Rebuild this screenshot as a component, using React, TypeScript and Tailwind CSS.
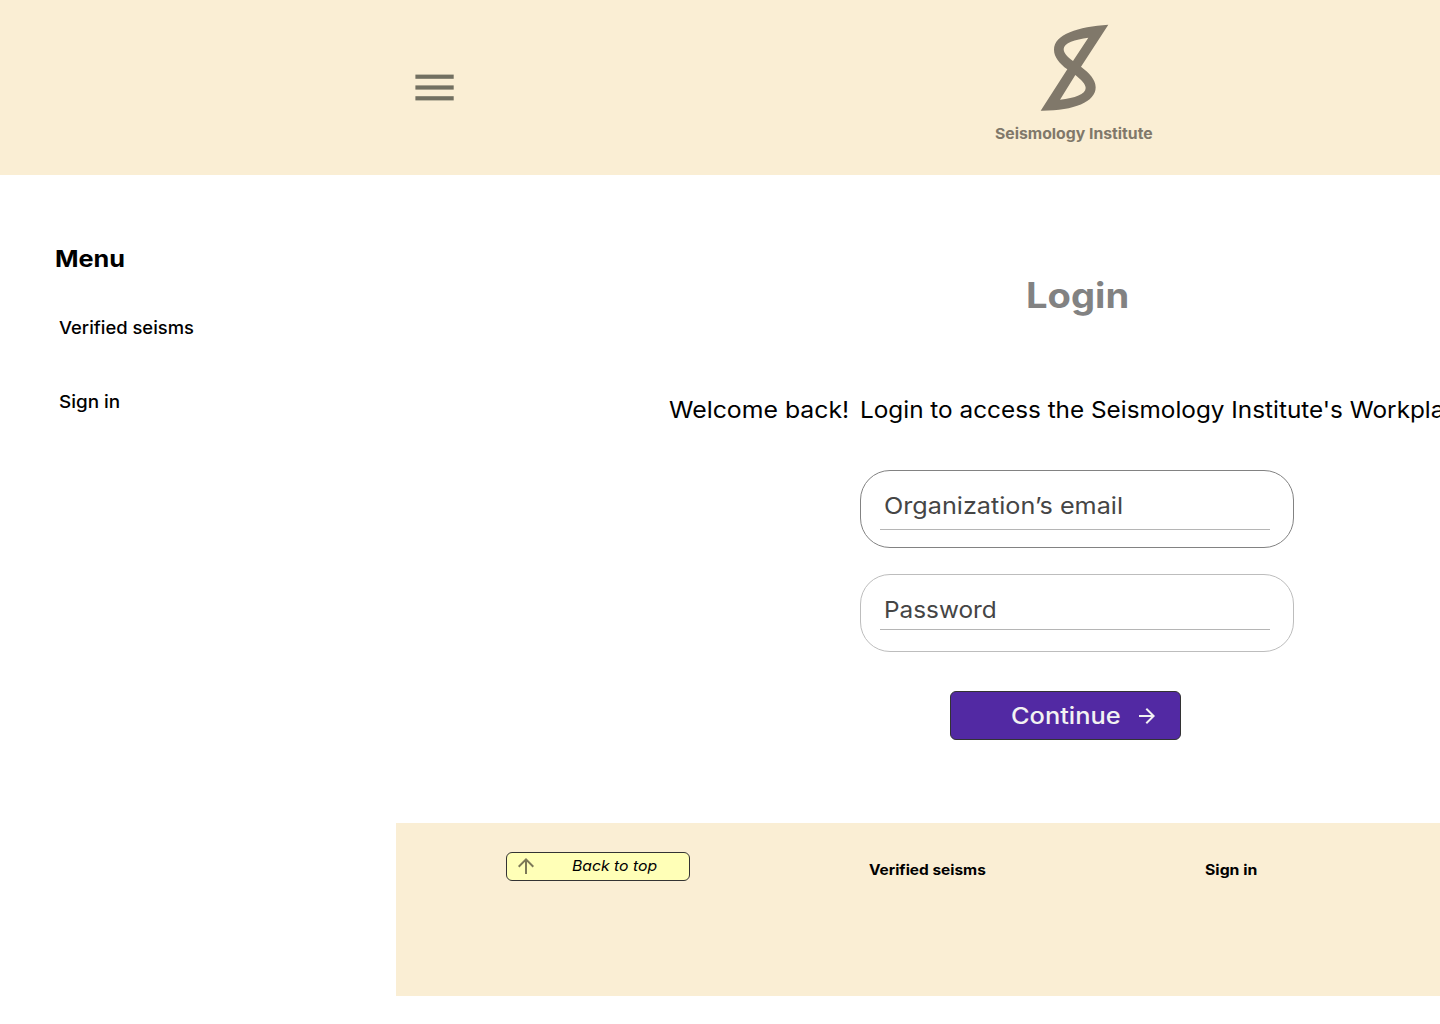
import React from "react";

function MenuIcon() {
  return (
    <svg width="40" height="28" viewBox="0 0 40 28" fill="#727061">
      <rect x="0.4" y="0.6" width="38.3" height="4.2" />
      <rect x="0.4" y="11.4" width="38.3" height="4.2" />
      <rect x="0.4" y="22.2" width="38.3" height="4.2" />
    </svg>
  );
}

function Logo() {
  return (
    <svg width="69" height="87" viewBox="180 42 207 261" fill="#80786a">
      <path
        fillRule="evenodd"
        d="M385 44C295 50 222 72 222 119C222 141 238 160 262 178L182 302C280 303 347 277 347 232C347 209 328 189 303 170ZM325 83L279 153C262 140 251 130 251 117C251 99 285 88 325 83ZM286 195L240 269C285 264 317 253 317 234C317 222 303 209 286 195Z"
      />
    </svg>
  );
}

function ArrowIcon({ className }: { className?: string }) {
  return (
    <svg width="24" height="24" viewBox="0 0 24 24" fill="currentColor" className={className}>
      <path d="M12 4l-1.41 1.41L16.17 11H4v2h12.17l-5.58 5.59L12 20l8-8z" />
    </svg>
  );
}

export default function App() {
  return (
    <div className="flex h-[1024px] w-full flex-col overflow-hidden bg-white font-['Inter',sans-serif] text-black">
      <header className="flex h-[175px] shrink-0 items-start bg-[#faeed4]">
        <button className="mt-[74px] ml-[415px] h-7 w-10" aria-label="Menu">
          <MenuIcon />
        </button>
        <div className="mt-6 ml-[539px] flex w-[160px] flex-col">
          <div className="ml-[46px] h-[87px]">
            <Logo />
          </div>
          <span className="mt-[13px] ml-px origin-left scale-x-[1.065] text-[14.8px] leading-5 font-bold whitespace-nowrap text-[#80786a]">
            Seismology Institute
          </span>
        </div>
      </header>

      <div className="flex min-h-0 flex-1">
        <aside className="w-[396px] shrink-0 pt-[68px] pl-[54.5px]">
          <h2 className="origin-left scale-x-[1.09] text-[23.2px] leading-8 font-bold">Menu</h2>
          <nav className="mt-[41px] ml-[4.5px] flex flex-col gap-[50px] text-[17.4px] leading-6 font-medium">
            <a className="origin-left scale-x-[1.056]">Verified seisms</a>
            <a className="origin-left scale-x-[1.085]">Sign in</a>
          </nav>
        </aside>

        <main className="flex min-w-0 flex-1 flex-col overflow-hidden">
          <h1 className="mt-24 ml-[629.5px] w-[110px] origin-left scale-x-[1.09] text-[35px] leading-[48px] font-bold text-[#828282]">
            Login
          </h1>
          <p className="mt-[75px] ml-[272.5px] flex text-[23.2px] leading-8 whitespace-nowrap">
            <span className="w-[191.5px] shrink-0 origin-left scale-x-[1.07]">Welcome back!&nbsp; </span>
            <span className="origin-left scale-x-[1.049]">
              Login to access the Seismology Institute's Workplace
            </span>
          </p>

          <form className="mt-11 ml-[464px] flex w-[434px] flex-col">
            <div className="h-[78px] rounded-[30px] border border-[#828282] px-[19px] pt-[19px]">
              <div className="h-10 w-[390px] border-b border-[#b5b5b5] pl-[3.5px] text-[23.2px] leading-8 text-[#454545]">
                <span className="inline-block origin-left scale-x-[1.087]">Organization’s email</span>
              </div>
            </div>
            <div className="mt-[26px] h-[78px] rounded-[30px] border border-[#bdbdbd] px-[19px] pt-[19px]">
              <div className="h-9 w-[390px] border-b border-[#b5b5b5] pl-[3.5px] text-[23.2px] leading-8 text-[#454545]">
                <span className="inline-block origin-left scale-x-[1.05]">Password</span>
              </div>
            </div>
            <button
              type="button"
              className="mt-[39px] ml-[90px] flex h-[49px] w-[231px] items-start rounded-[6px] border border-[#333333] bg-[#5229a3] pt-[7px] pl-[59.5px] text-[#f2f2f2]"
            >
              <span className="mt-px w-[124.5px] origin-left scale-x-[1.095] text-left text-[23.2px] leading-8 font-medium">
                Continue
              </span>
              <ArrowIcon className="mt-[5px]" />
            </button>
          </form>

          <footer className="mt-[83px] flex h-[173px] shrink-0 items-start bg-[#faeed4] pt-[29px] pl-[110px]">
            <button className="flex h-[29px] w-[184px] shrink-0 items-start rounded-[6px] border border-[#333333] bg-[#ffffb7] pl-[7px]">
              <ArrowIcon className="mt-px -rotate-90 text-[#7c7858]" />
              <span className="mt-[3px] ml-[34px] origin-left scale-x-[1.08] text-[14.6px] leading-5 whitespace-nowrap italic">
                Back to top
              </span>
            </button>
            <nav className="mt-2 ml-[179px] flex text-[14.5px] leading-5 font-bold whitespace-nowrap">
              <a className="w-[336px] origin-left scale-x-[1.065]">Verified seisms</a>
              <a className="origin-left scale-x-[1.09]">Sign in</a>
            </nav>
          </footer>
        </main>
      </div>
    </div>
  );
}
